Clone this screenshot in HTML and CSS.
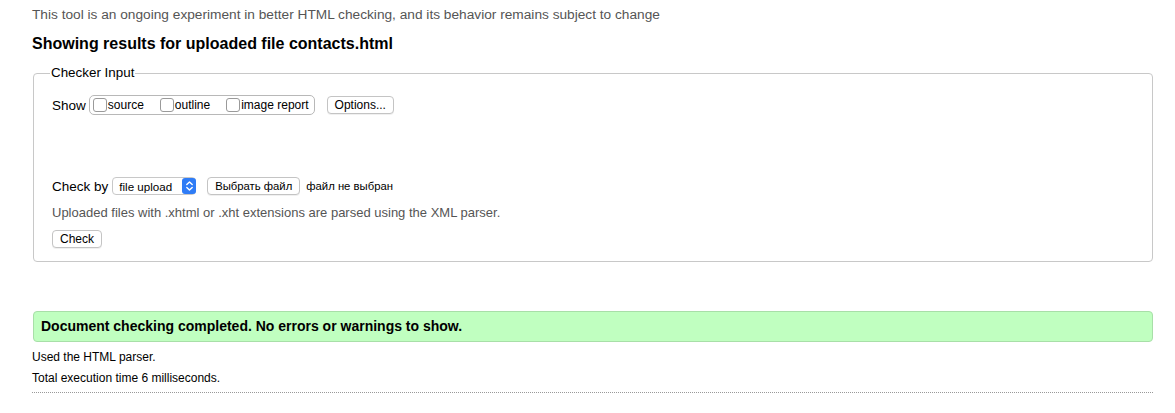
FILE: index.html
```html
<!DOCTYPE html>
<html>
<head>
<meta charset="utf-8">
<link rel="stylesheet" href="styles.css">
</head>
<body>
<div class="page">
  <p class="intro">This tool is an ongoing experiment in better HTML checking, and its behavior remains subject to change</p>
  <h2 class="title">Showing results for uploaded file contacts.html</h2>
  <fieldset class="input">
    <legend>Checker Input</legend>
    <div class="row show-row">
      <span class="label">Show</span>
      <span class="group">
        <label class="opt"><span class="cb"></span>source</label>
        <label class="opt"><span class="cb"></span>outline</label>
        <label class="opt"><span class="cb"></span>image report</label>
      </span>
      <span class="btn opts">Options...</span>
    </div>
    <div class="row check-row">
      <span class="label">Check by</span>
      <span class="select">file upload<span class="arrow"><svg width="9" height="12" viewBox="0 0 9 12"><path d="M1.8 4.6 L4.5 2 L7.2 4.6 M1.8 7.4 L4.5 10 L7.2 7.4" fill="none" stroke="#fff" stroke-width="1.4" stroke-linecap="round" stroke-linejoin="round"/></svg></span></span>
      <span class="btn file">Выбрать файл</span>
      <span class="nofile">файл не выбран</span>
    </div>
    <p class="note">Uploaded files with .xhtml or .xht extensions are parsed using the XML parser.</p>
    <span class="btn submit">Check</span>
  </fieldset>
  <p class="success">Document checking completed. No errors or warnings to show.</p>
  <p class="stat">Used the HTML parser.</p>
  <p class="stat">Total execution time 6 milliseconds.</p>
  <div class="rule"></div>
</div>
</body>
</html>
```
FILE: styles.css
```css
html, body {
  margin: 0;
  padding: 0;
  background: #fff;
}
body {
  font-family: "Liberation Sans", Arial, sans-serif;
  color: #000;
}
.page {
  margin: 0 22px 0 32px;
  padding-top: 6px;
}
.intro {
  margin: 0;
  font-size: 13.7px;
  line-height: 18px;
  color: #555;
}
.title {
  margin: 10px 0 0;
  font-size: 16px;
  line-height: 20px;
  font-weight: bold;
}
.input {
  margin: 11px 0 0 1px;
  padding: 0 18px 13px 18px;
  border: 1px solid #c8c8c8;
  border-radius: 4px;
  min-height: 0;
}
.input legend {
  padding: 0 1px;
  margin-left: -2px;
  font-size: 13.4px;
  line-height: 16px;
}
.row {
  display: flex;
  align-items: center;
  font-size: 13.5px;
}
.show-row {
  margin-top: 14px;
  height: 20px;
}
.label {
  margin-right: 3px;
}
.check-row .label {
  margin-right: 4px;
}
.group {
  display: inline-flex;
  align-items: center;
  height: 18px;
  padding: 0 5px 0 3px;
  border: 1px solid #b8b8b8;
  border-radius: 5px;
  font-size: 12px;
  gap: 16px;
}
.opt {
  display: inline-flex;
  align-items: center;
}
.cb {
  width: 12px;
  height: 12px;
  border: 1px solid #9a9a9a;
  border-radius: 3px;
  margin-right: 1px;
  background: #fff;
}
.btn {
  display: inline-flex;
  align-items: center;
  height: 16px;
  padding: 0 7px;
  border: 1px solid #c4c4c4;
  border-radius: 4px;
  font-size: 12px;
  background: #fff;
  box-shadow: 0 1px 0 rgba(0,0,0,0.06);
}
.opts {
  margin-left: 12px;
}
.check-row {
  margin-top: 61px;
  height: 20px;
}
.select {
  display: inline-flex;
  align-items: center;
  height: 16px;
  padding: 0 0 0 6px;
  border: 1px solid #c8c8c8;
  border-radius: 4px;
  font-size: 11.6px;
  gap: 10px;
}
.arrow {
  display: inline-flex;
  align-items: center;
  justify-content: center;
  width: 14px;
  height: 16px;
  background: #2f7cf6;
  border-radius: 3px;
  margin-right: -1px;
}
.file {
  margin-left: 11px;
  font-size: 11.3px;
}
.nofile {
  margin-left: 6px;
  font-size: 11.3px;
}
.note {
  margin: 8px 0 0;
  font-size: 13px;
  line-height: 18px;
  color: #555;
}
.submit {
  margin-top: 8px;
}
.success {
  margin: 49px 0 0 1px;
  padding: 6px 7px;
  font-size: 14px;
  line-height: 17px;
  font-weight: bold;
  background: #c0ffc0;
  border: 1px solid #a8dfa8;
  border-radius: 4px;
}
.stat {
  margin: 8px 0 0;
  font-size: 12px;
  line-height: 15px;
}
.stat + .stat {
  margin-top: 6px;
}
.rule {
  margin-top: 6px;
  border-top: 1px dotted #999;
}
```
